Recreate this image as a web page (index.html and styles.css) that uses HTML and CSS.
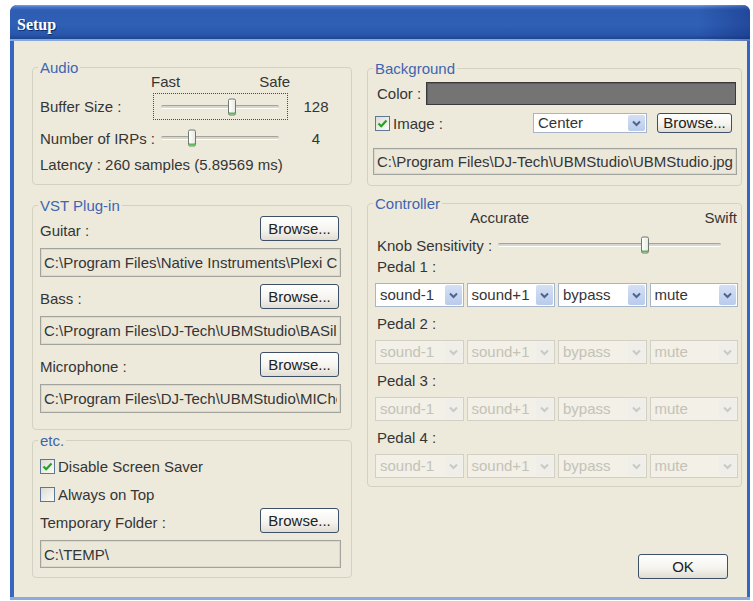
FILE: index.html
```html
<!DOCTYPE html>
<html lang="en">
<head>
<meta charset="utf-8">
<title>Setup</title>
<link rel="stylesheet" href="styles.css">
</head>
<body>
<div class="window">
  <div class="titlebar"><span class="title">Setup</span></div>
  <div class="client">
    <div class="col col-left">
      <section class="group group-audio">
        <h2 class="group-title">Audio</h2>
        <div class="scale scale-audio"><span>Fast</span><span>Safe</span></div>
        <div class="row row-buffer">
          <label class="lbl-audio">Buffer Size :</label>
          <div class="slider slider-audio focus"><div class="track"><span class="thumb" style="left:60%"></span></div></div>
          <span class="value">128</span>
        </div>
        <div class="row row-irps">
          <label class="lbl-audio">Number of IRPs :</label>
          <div class="slider slider-audio"><div class="track"><span class="thumb" style="left:26%"></span></div></div>
          <span class="value">4</span>
        </div>
        <p class="latency">Latency : 260 samples (5.89569 ms)</p>
      </section>

      <section class="group group-vst">
        <h2 class="group-title">VST Plug-in</h2>
        <div class="browse-row"><label>Guitar :</label><button class="btn">Browse...</button></div>
        <input class="path" readonly value="C:\Program Files\Native Instruments\Plexi C">
        <div class="browse-row"><label>Bass :</label><button class="btn">Browse...</button></div>
        <input class="path" readonly value="C:\Program Files\DJ-Tech\UBMStudio\BASili">
        <div class="browse-row"><label>Microphone :</label><button class="btn">Browse...</button></div>
        <input class="path" readonly value="C:\Program Files\DJ-Tech\UBMStudio\MIChe">
      </section>

      <section class="group group-etc">
        <h2 class="group-title">etc.</h2>
        <div class="check-row">
          <span class="check"><svg width="13" height="13" viewBox="0 0 13 13"><path d="M2.5 6.5 L5.2 9.2 L10.5 3.5" fill="none" stroke="#22a322" stroke-width="2.2"/></svg></span>
          <span>Disable Screen Saver</span>
        </div>
        <div class="check-row">
          <span class="check"></span>
          <span>Always on Top</span>
        </div>
        <div class="browse-row"><label>Temporary Folder :</label><button class="btn">Browse...</button></div>
        <input class="path" readonly value="C:\TEMP\">
      </section>
    </div>

    <div class="col col-right">
      <section class="group group-bg">
        <h2 class="group-title">Background</h2>
        <div class="color-row">
          <label>Color :</label>
          <div class="swatch"></div>
        </div>
        <div class="image-row">
          <span class="check"><svg width="13" height="13" viewBox="0 0 13 13"><path d="M2.5 6.5 L5.2 9.2 L10.5 3.5" fill="none" stroke="#22a322" stroke-width="2.2"/></svg></span>
          <label>Image :</label>
          <div class="combo combo-center"><span class="combo-text">Center</span><span class="combo-btn"><svg width="9" height="7" viewBox="0 0 9 7"><path d="M1 1.5 L4.5 5 L8 1.5" fill="none" stroke="currentColor" stroke-width="2"/></svg></span></div>
          <button class="btn btn-sm">Browse...</button>
        </div>
        <input class="path" readonly value="C:\Program Files\DJ-Tech\UBMStudio\UBMStudio.jpg">
      </section>

      <section class="group group-ctrl">
        <h2 class="group-title">Controller</h2>
        <div class="scale scale-ctrl"><span>Accurate</span><span>Swift</span></div>
        <div class="row row-knob">
          <label>Knob Sensitivity :</label>
          <div class="slider slider-knob"><div class="track"><span class="thumb" style="left:66%"></span></div></div>
        </div>

        <p class="pedal-label">Pedal 1 :</p>
        <div class="combo-row">
          <div class="combo"><span class="combo-text">sound-1</span><span class="combo-btn"><svg width="9" height="7" viewBox="0 0 9 7"><path d="M1 1.5 L4.5 5 L8 1.5" fill="none" stroke="currentColor" stroke-width="2"/></svg></span></div>
          <div class="combo"><span class="combo-text">sound+1</span><span class="combo-btn"><svg width="9" height="7" viewBox="0 0 9 7"><path d="M1 1.5 L4.5 5 L8 1.5" fill="none" stroke="currentColor" stroke-width="2"/></svg></span></div>
          <div class="combo"><span class="combo-text">bypass</span><span class="combo-btn"><svg width="9" height="7" viewBox="0 0 9 7"><path d="M1 1.5 L4.5 5 L8 1.5" fill="none" stroke="currentColor" stroke-width="2"/></svg></span></div>
          <div class="combo"><span class="combo-text">mute</span><span class="combo-btn"><svg width="9" height="7" viewBox="0 0 9 7"><path d="M1 1.5 L4.5 5 L8 1.5" fill="none" stroke="currentColor" stroke-width="2"/></svg></span></div>
        </div>

        <p class="pedal-label">Pedal 2 :</p>
        <div class="combo-row">
          <div class="combo disabled"><span class="combo-text">sound-1</span><span class="combo-btn"><svg width="9" height="7" viewBox="0 0 9 7"><path d="M1 1.5 L4.5 5 L8 1.5" fill="none" stroke="currentColor" stroke-width="2"/></svg></span></div>
          <div class="combo disabled"><span class="combo-text">sound+1</span><span class="combo-btn"><svg width="9" height="7" viewBox="0 0 9 7"><path d="M1 1.5 L4.5 5 L8 1.5" fill="none" stroke="currentColor" stroke-width="2"/></svg></span></div>
          <div class="combo disabled"><span class="combo-text">bypass</span><span class="combo-btn"><svg width="9" height="7" viewBox="0 0 9 7"><path d="M1 1.5 L4.5 5 L8 1.5" fill="none" stroke="currentColor" stroke-width="2"/></svg></span></div>
          <div class="combo disabled"><span class="combo-text">mute</span><span class="combo-btn"><svg width="9" height="7" viewBox="0 0 9 7"><path d="M1 1.5 L4.5 5 L8 1.5" fill="none" stroke="currentColor" stroke-width="2"/></svg></span></div>
        </div>

        <p class="pedal-label">Pedal 3 :</p>
        <div class="combo-row">
          <div class="combo disabled"><span class="combo-text">sound-1</span><span class="combo-btn"><svg width="9" height="7" viewBox="0 0 9 7"><path d="M1 1.5 L4.5 5 L8 1.5" fill="none" stroke="currentColor" stroke-width="2"/></svg></span></div>
          <div class="combo disabled"><span class="combo-text">sound+1</span><span class="combo-btn"><svg width="9" height="7" viewBox="0 0 9 7"><path d="M1 1.5 L4.5 5 L8 1.5" fill="none" stroke="currentColor" stroke-width="2"/></svg></span></div>
          <div class="combo disabled"><span class="combo-text">bypass</span><span class="combo-btn"><svg width="9" height="7" viewBox="0 0 9 7"><path d="M1 1.5 L4.5 5 L8 1.5" fill="none" stroke="currentColor" stroke-width="2"/></svg></span></div>
          <div class="combo disabled"><span class="combo-text">mute</span><span class="combo-btn"><svg width="9" height="7" viewBox="0 0 9 7"><path d="M1 1.5 L4.5 5 L8 1.5" fill="none" stroke="currentColor" stroke-width="2"/></svg></span></div>
        </div>

        <p class="pedal-label">Pedal 4 :</p>
        <div class="combo-row">
          <div class="combo disabled"><span class="combo-text">sound-1</span><span class="combo-btn"><svg width="9" height="7" viewBox="0 0 9 7"><path d="M1 1.5 L4.5 5 L8 1.5" fill="none" stroke="currentColor" stroke-width="2"/></svg></span></div>
          <div class="combo disabled"><span class="combo-text">sound+1</span><span class="combo-btn"><svg width="9" height="7" viewBox="0 0 9 7"><path d="M1 1.5 L4.5 5 L8 1.5" fill="none" stroke="currentColor" stroke-width="2"/></svg></span></div>
          <div class="combo disabled"><span class="combo-text">bypass</span><span class="combo-btn"><svg width="9" height="7" viewBox="0 0 9 7"><path d="M1 1.5 L4.5 5 L8 1.5" fill="none" stroke="currentColor" stroke-width="2"/></svg></span></div>
          <div class="combo disabled"><span class="combo-text">mute</span><span class="combo-btn"><svg width="9" height="7" viewBox="0 0 9 7"><path d="M1 1.5 L4.5 5 L8 1.5" fill="none" stroke="currentColor" stroke-width="2"/></svg></span></div>
        </div>
      </section>

      <div class="footer"><button class="btn btn-ok">OK</button></div>
    </div>
  </div>
</div>
</body>
</html>
```

FILE: styles.css
```css
body {
  margin: 0;
  background: #fff;
  font: 15px/17px "Liberation Sans", Arial, sans-serif;
  color: #353535;
}

/* window frame: blue sides, paler bottom edge */
.window {
  margin: 5px 0 0 10px;
  width: 740px;
  height: 595px;
  display: flex;
  flex-direction: column;
  background: linear-gradient(to top, #8eaadb 3px, #3566c0 3px);
  border-radius: 7px 7px 0 0;
  overflow: hidden;
}

.titlebar {
  flex: none;
  height: 36px;
  box-sizing: border-box;
  padding: 3px 0 0 7px;
  display: flex;
  align-items: center;
  background:
    linear-gradient(to right, rgba(10, 30, 110, 0) 93%, rgba(10, 30, 110, 0.35)),
    linear-gradient(#79a4e6 0, #4676c9 2px, #2e5db2 14%, #2f60b6 55%, #2756a9 84%, #1d468f 93%, #86a8de 95%, #86a8de 100%);
}

.title {
  font: bold 16px/18px "Liberation Serif", serif;
  color: #fff;
  text-shadow: 1px 1px 0 #0d2a6b;
}

.client {
  flex: 1;
  margin: 0 3px 3px 4px;
  background: #edeadb;
  display: flex;
  gap: 15px;
  padding: 26px 5px 0 18px;
}

.col {
  display: flex;
  flex-direction: column;
}

.col-left { width: 320px; }
.col-right { width: 375px; padding-top: 1px; }

/* group boxes */
.group {
  position: relative;
  border: 1px solid #d3d1c2;
  border-radius: 4px;
}

.group-title {
  position: absolute;
  top: -9px;
  left: 5px;
  margin: 0;
  padding: 0 2px;
  font: inherit;
  line-height: 17px;
  color: #3d65b2;
  background: #edeadb;
}

.group-audio { padding: 5px 7px 11px; margin-bottom: 20px; }
.group-vst { padding: 10px 10px 16px 7px; margin-bottom: 10px; }
.group-etc { padding: 16px 10px 9px 7px; }
.group-bg { padding: 13px 4px 10px 5px; margin-bottom: 17px; }
.group-ctrl { padding: 5px 4px 8px 5px; }

/* sliders */
.scale {
  display: flex;
  justify-content: space-between;
}

.scale-audio { margin-left: 111px; width: 139px; }
.scale-ctrl { margin-left: 97px; }

.row {
  display: flex;
  align-items: center;
}

.row-buffer { height: 27px; margin-top: 3px; }
.row-irps { height: 20px; margin-top: 8px; }
.row-knob { height: 20px; margin-top: 9px; }

.lbl-audio {
  flex: none;
  width: 113px;
  white-space: nowrap;
}

.row-knob label {
  flex: none;
  width: 113px;
  margin-left: 4px;
  white-space: nowrap;
}

.slider {
  flex: none;
  box-sizing: border-box;
  height: 100%;
  display: flex;
  align-items: center;
  padding: 0 8px 0 7px;
  border: 1px dotted transparent;
}

.slider-audio { width: 135px; }
.slider-knob { width: 240px; }
.slider.focus { border-color: #4a4a4a; }

.track {
  position: relative;
  flex: 1;
  height: 2px;
  border-top: 1px solid #a4a39a;
  border-bottom: 1px solid #fff;
  background: #d8d6ca;
  border-radius: 2px;
}

.thumb {
  position: absolute;
  top: 50%;
  width: 8px;
  height: 17px;
  box-sizing: border-box;
  transform: translate(-50%, -50%);
  border: 1px solid #707b70;
  border-radius: 2px;
  background: linear-gradient(to right, #fff, #e9ebe2);
  box-shadow: inset 0 -2px 0 #4fbf4f;
}

.value {
  width: 56px;
  text-align: center;
}

.latency { margin: 8px 0 0; }

/* buttons */
.btn {
  flex: none;
  width: 79px;
  height: 25px;
  padding: 0;
  margin-right: 2px;
  font: inherit;
  color: #222;
  border: 1px solid #3d5068;
  border-radius: 3px;
  background: linear-gradient(#fff, #f5f4ef 55%, #e1ddd2);
}

.btn-sm {
  width: 75px;
  height: 20px;
  margin: 0 5px 0 10px;
  line-height: 16px;
}

.btn-ok { width: 90px; height: 25px; margin: 0; }

.browse-row {
  display: flex;
  justify-content: space-between;
  align-items: center;
  height: 25px;
}

.browse-row label { padding-top: 3px; }

/* read-only path fields */
.path {
  display: block;
  box-sizing: border-box;
  width: 100%;
  height: 29px;
  margin: 7px 0 0;
  padding: 0 3px;
  font: inherit;
  color: #353535;
  background: #ebe8da;
  border: 1px solid #a3a39d;
  box-shadow: inset 0 0 0 1px #dcd9cb;
  outline: none;
}

.path + .browse-row { margin-top: 7px; }
.group-etc .path { height: 28px; }
.group-bg .path { height: 27px; margin-top: 15px; }

/* check boxes */
.check-row {
  display: flex;
  align-items: center;
  gap: 3px;
  height: 18px;
}

.check-row + .check-row { margin-top: 10px; }
.check-row + .browse-row { margin-top: 5px; }

.check {
  flex: none;
  width: 15px;
  height: 15px;
  box-sizing: border-box;
  display: flex;
  align-items: center;
  justify-content: center;
  border: 1px solid #5d7796;
  background: linear-gradient(135deg, #dedcd2, #fbfbf8);
}

/* background colour */
.color-row {
  display: flex;
  align-items: center;
  height: 23px;
}

.color-row label {
  flex: none;
  width: 49px;
  margin-left: 4px;
}

.swatch {
  flex: 1;
  height: 23px;
  margin-right: 1px;
  box-sizing: border-box;
  background: #747474;
  border: 1px solid #3b3b3b;
  box-shadow: inset 1px 1px 0 #5c5c5c;
}

.image-row {
  display: flex;
  align-items: center;
  height: 20px;
  margin-top: 8px;
}

.image-row .check { margin-left: 2px; }
.image-row label { margin-left: 3px; }

/* drop-down boxes */
.combo {
  display: flex;
  box-sizing: border-box;
  height: 24px;
  min-width: 0;
  border: 1px solid #a7b5c9;
  background: #fff;
  color: #353535;
}

.combo-text {
  flex: 1;
  min-width: 0;
  padding-left: 4px;
  line-height: 22px;
  overflow: hidden;
  white-space: nowrap;
}

.combo-btn {
  flex: none;
  width: 17px;
  margin: 1px;
  display: flex;
  align-items: center;
  justify-content: center;
  border-radius: 2px;
  background: linear-gradient(#d5e0f5, #b9cbec);
  color: #4d6590;
}

.combo-center {
  width: 114px;
  height: 20px;
  margin-left: auto;
}

.combo-center .combo-text { line-height: 18px; }

.combo.disabled {
  background: #f2f0e7;
  border-color: #d2d0c5;
  color: #c4c2b6;
}

.combo.disabled .combo-btn {
  background: #efeee8;
  color: #c9c9c6;
}

.pedal-label { margin: 3px 0 0 4px; }
.combo-row + .pedal-label { margin-top: 8px; }

.combo-row {
  display: grid;
  grid-template-columns: repeat(4, 1fr);
  gap: 3px;
  margin: 8px -1px 0 2px;
}

.footer {
  flex: 1;
  display: flex;
  justify-content: flex-end;
  align-items: flex-end;
  padding: 0 14px 18px 0;
}
```
